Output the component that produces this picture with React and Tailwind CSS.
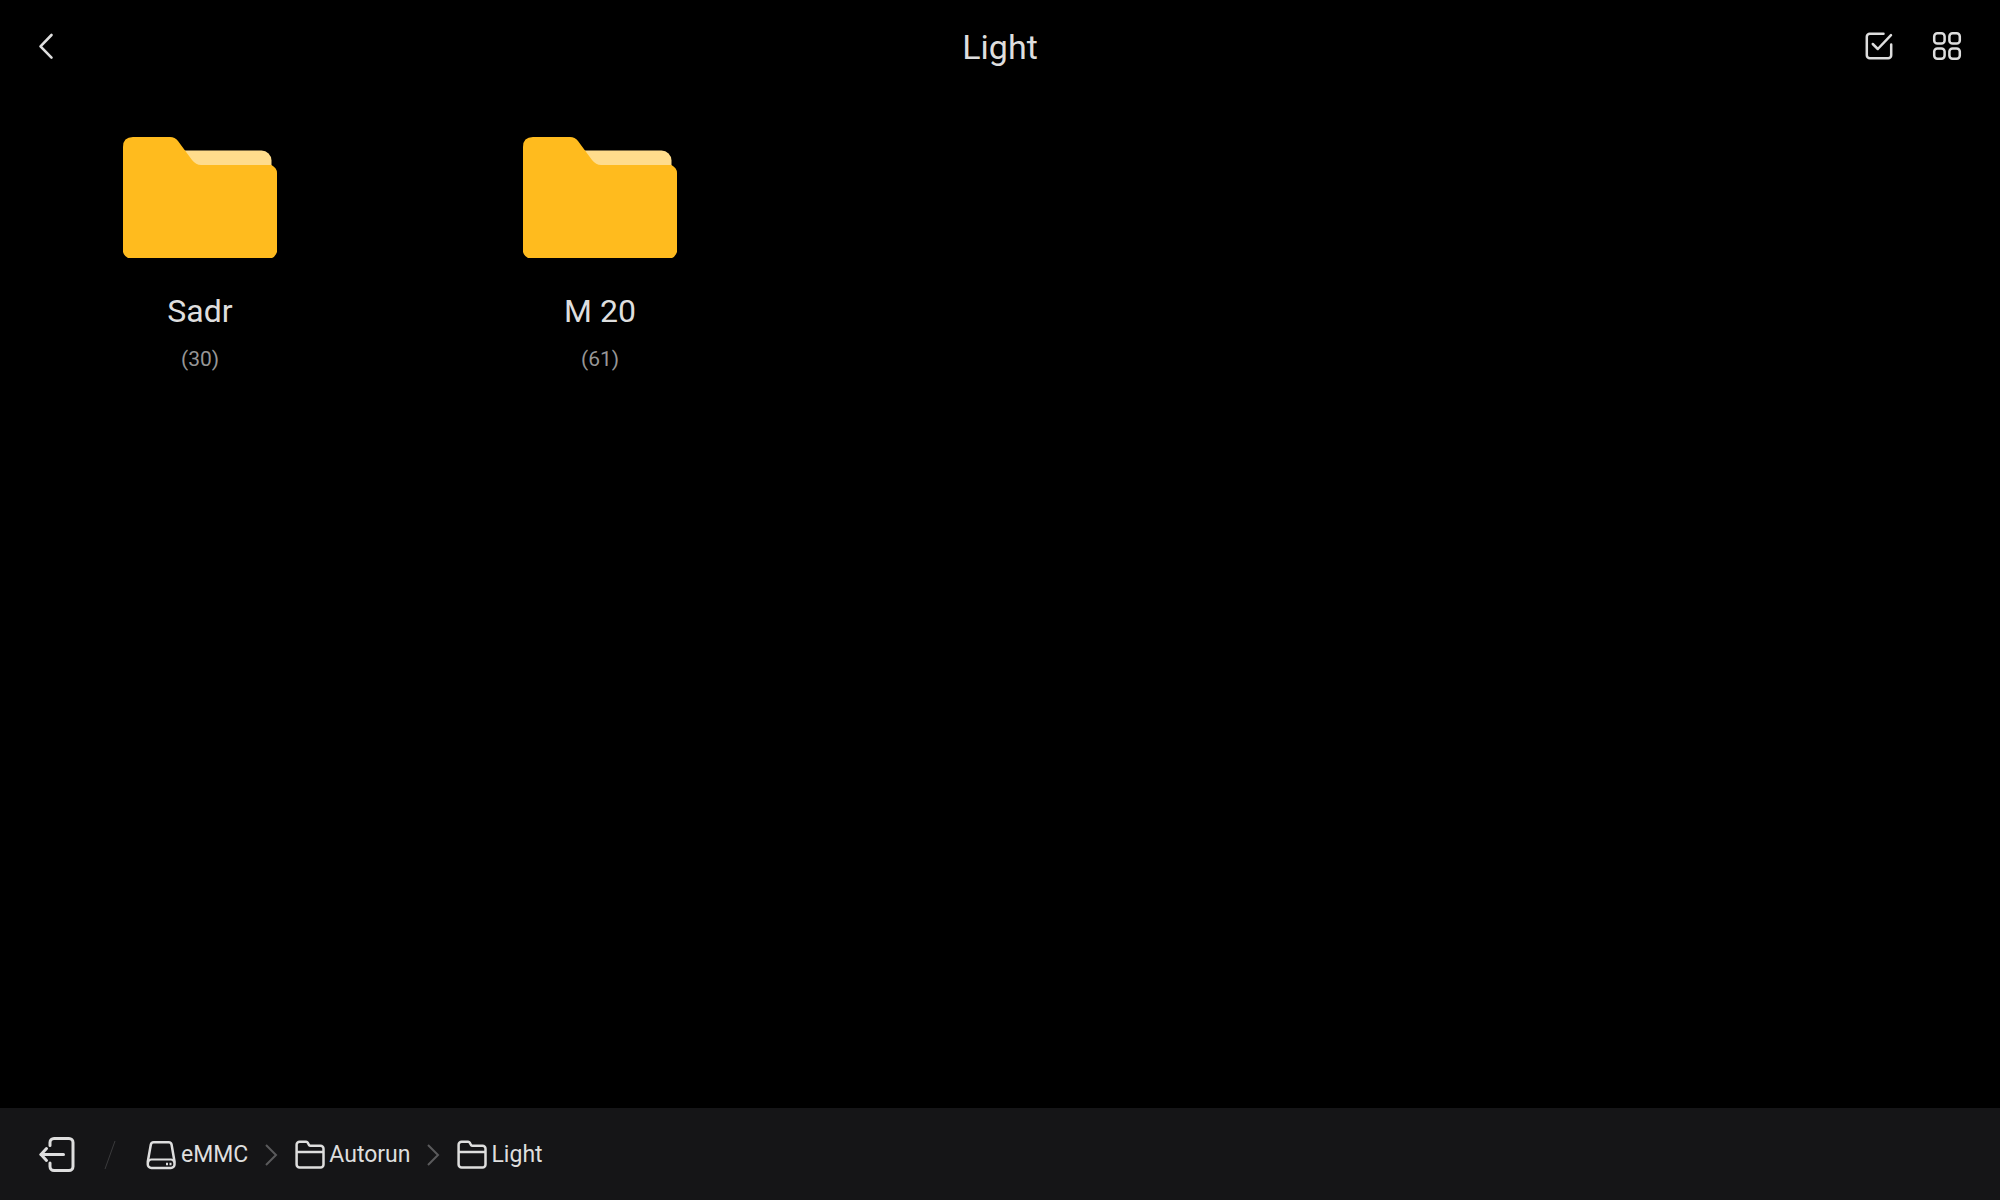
const FOLDERS = [
  { name: "Sadr", count: 30 },
  { name: "M 20", count: 61 },
];

const CRUMBS = [
  { label: "eMMC", Icon: DriveIcon },
  { label: "Autorun", Icon: SmallFolderIcon },
  { label: "Light", Icon: SmallFolderIcon },
];

function BackIcon() {
  return (
    <svg width="32" height="32" viewBox="0 0 32 32" fill="none" stroke="currentColor" strokeWidth="2.6" strokeLinecap="round" strokeLinejoin="round" aria-hidden="true">
      <path d="M21.5 5 10.5 16.3l11 11.3" />
    </svg>
  );
}

function SelectIcon() {
  return (
    <svg width="32" height="32" viewBox="0 0 32 32" fill="none" stroke="currentColor" strokeWidth="2.5" strokeLinecap="round" strokeLinejoin="round" aria-hidden="true">
      <path d="M20.5 3.8H6.8a3 3 0 0 0-3 3v18.4a3 3 0 0 0 3 3h18.4a3 3 0 0 0 3-3V14.5" />
      <path d="m9.8 14 5 5L28 5.2" />
    </svg>
  );
}

function GridIcon() {
  return (
    <svg width="32" height="32" viewBox="0 0 32 32" fill="none" stroke="currentColor" strokeWidth="2.5" aria-hidden="true">
      <rect x="3.2" y="3.2" width="10.4" height="10.4" rx="3.2" />
      <rect x="18.4" y="3.2" width="10.4" height="10.4" rx="3.2" />
      <rect x="3.2" y="18.4" width="10.4" height="10.4" rx="3.2" />
      <rect x="18.4" y="18.4" width="10.4" height="10.4" rx="3.2" />
    </svg>
  );
}

function FolderArt() {
  return (
    <svg width="154" height="121" viewBox="0 0 154 121" aria-hidden="true">
      <path d="M58 13.5h80.500a10 10 0 0 1 10 10V40H58Z" fill="#ffdc8c" />
      <path
        d="M10 0h37q5 0 8 4l14 19q4 5 9 5h70.500q5.500 3 5.500 8v79q-2 5-5 6H5q-4-2-5-6V10Q0 0 10 0Z"
        fill="#ffbb1e"
      />
    </svg>
  );
}

function ExitIcon() {
  return (
    <svg width="40" height="40" viewBox="0 0 40 40" fill="none" stroke="currentColor" strokeWidth="3" strokeLinecap="round" strokeLinejoin="round" aria-hidden="true">
      <path d="M13 10.500V7.500a4 4 0 0 1 4-4H32a4 4 0 0 1 4 4v24a4 4 0 0 1-4 4H17a4 4 0 0 1-4-4V28" />
      <path d="M26.500 19.500H4" />
      <path d="M9.500 13.500 4 19.500 9.500 25.500" />
    </svg>
  );
}

function DriveIcon() {
  return (
    <svg width="32" height="32" viewBox="0 0 32 32" fill="none" stroke="currentColor" strokeWidth="2.5" strokeLinejoin="round" aria-hidden="true">
      <path d="M8.800 3.200H23.600a3 3 0 0 1 3 2.500L29.500 22.500v2.900a3.600 3.600 0 0 1-3.600 3.600H6.400a3.600 3.600 0 0 1-3.600-3.600V22.500L5.800 5.700a3 3 0 0 1 3-2.500Z" />
      <path d="M3 23.500q.8-3 3.400-3h19.500q2.600 0 3.400 3" strokeWidth="2.200" />
      <path d="M21 25h2M24.500 25h2" />
    </svg>
  );
}

function SmallFolderIcon() {
  return (
    <svg width="30" height="32" viewBox="1 0 30 32" fill="none" stroke="currentColor" strokeWidth="2.5" strokeLinejoin="round" aria-hidden="true">
      <path d="M5.600 2.800h6.600q1 0 1.500.9l1.300 2.300q.5.800 1.500.8h10a3 3 0 0 1 3 3v15.700a3 3 0 0 1-3 3H5.600a3 3 0 0 1-3-3V5.800a3 3 0 0 1 3-3Z" />
      <path d="M2.600 13h26.900" />
    </svg>
  );
}

function Chevron() {
  return (
    <svg className="text-[#5a5a5c]" width="13" height="24" viewBox="0 0 13 24" fill="none" stroke="currentColor" strokeWidth="2" aria-hidden="true">
      <path d="M1 2 11 12 1 22" />
    </svg>
  );
}

function Header({ title }) {
  return (
    <header className="grid h-23 grid-cols-[1fr_auto_1fr] items-center">
      <div className="flex pl-[30px]">
        <button type="button" aria-label="Back">
          <BackIcon />
        </button>
      </div>
      <h1 className="pt-0.5 text-[34px] leading-10">{title}</h1>
      <div className="flex justify-end gap-9 pr-[37px]">
        <button type="button" aria-label="Select">
          <SelectIcon />
        </button>
        <button type="button" aria-label="Grid view">
          <GridIcon />
        </button>
      </div>
    </header>
  );
}

function Breadcrumbs() {
  return (
    <footer className="flex h-23 items-center bg-[#151517] pt-0.5 pl-[37px]">
      <button type="button" aria-label="Exit">
        <ExitIcon />
      </button>
      <svg className="ml-[27px] text-[#3a3a3c]" width="12" height="30" viewBox="0 0 12 30" stroke="currentColor" aria-hidden="true">
        <path d="M11 1 1 29" />
      </svg>
      <nav aria-label="Path" className="ml-[29px] flex items-center gap-[17px]">
        {CRUMBS.map(({ label, Icon }, i) => (
          <div key={label} className="flex items-center gap-[17px]">
            {i > 0 && <Chevron />}
            <a href="#" className="flex items-center gap-1 text-[23px] leading-8">
              <Icon />
              {label}
            </a>
          </div>
        ))}
      </nav>
    </footer>
  );
}

export default function App() {
  return (
    <div className="flex min-h-screen flex-col bg-black font-[Roboto,sans-serif] text-[#dedede]">
      <Header title="Light" />
      <main className="grid flex-1 grid-cols-5 content-start pt-[45px]">
        {FOLDERS.map((folder) => (
          <button key={folder.name} type="button" className="flex flex-col items-center">
            <FolderArt />
            <span className="mt-[33px] text-[32px] leading-10">{folder.name}</span>
            <span className="mt-3 text-[21px] leading-8 text-[#969696]">({folder.count})</span>
          </button>
        ))}
      </main>
      <Breadcrumbs />
    </div>
  );
}
